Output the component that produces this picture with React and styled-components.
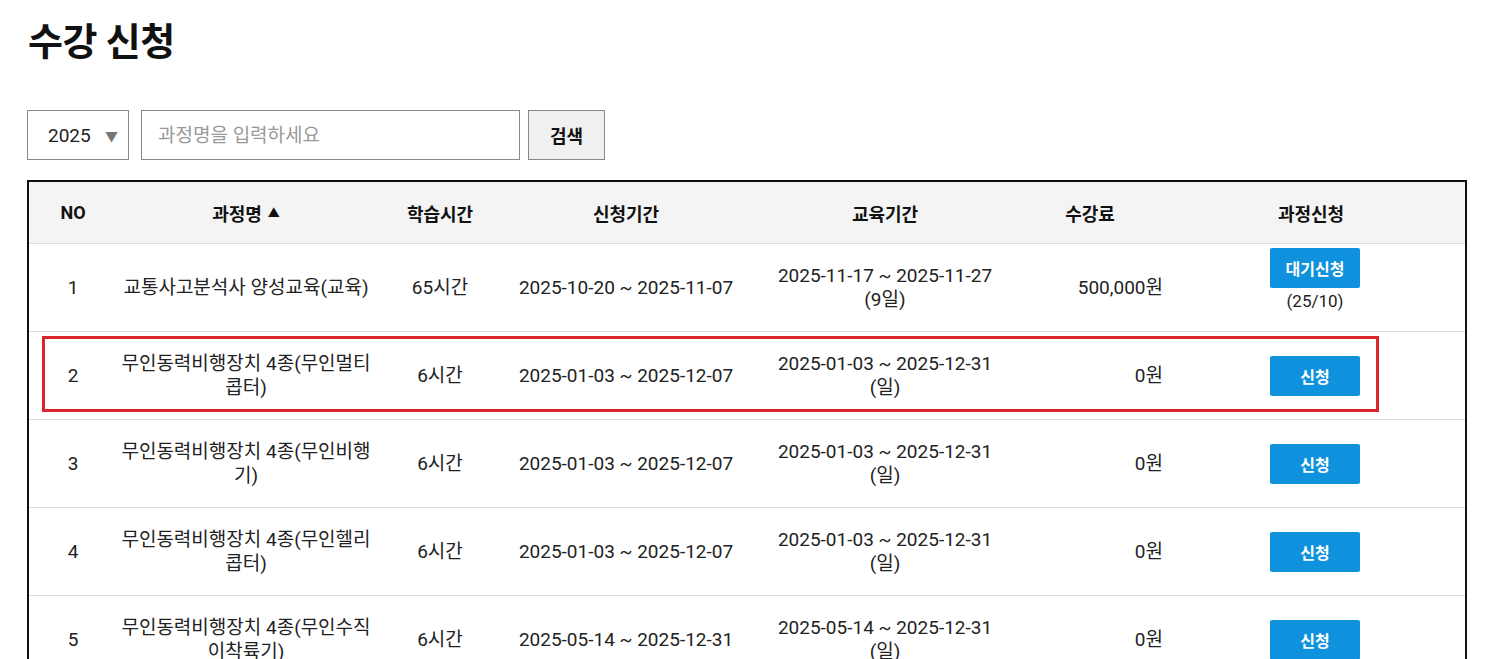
import React from "react";
import styled, { createGlobalStyle } from "styled-components";

const Global = createGlobalStyle`
  html, body { margin: 0; padding: 0; background: #fff; }
  body { font-family: Roboto, "Noto Sans CJK KR", sans-serif; color: #222; }
  * { box-sizing: border-box; }
`;

const Page = styled.div`
  padding: 18px 29px 0 27px;
`;

const Title = styled.h1`
  margin: 0;
  font-size: 38px;
  font-weight: 700;
  line-height: 48px;
  color: #111;
  letter-spacing: -0.5px;
  padding-left: 1px;
`;

const SearchBar = styled.div`
  display: flex;
  align-items: stretch;
  margin-top: 44px;
  height: 50px;
`;

const SelectBox = styled.div`
  width: 102px;
  border: 1px solid #888;
  display: flex;
  align-items: center;
  justify-content: space-between;
  padding: 0 10px 0 20px;
  font-size: 19px;
  color: #222;
  background: #fff;
`;

const Arrow = styled.span`
  color: #777;
  font-size: 13px;
`;

const SearchInput = styled.input`
  width: 379px;
  margin-left: 12px;
  border: 1px solid #888;
  padding: 0 16px;
  font-family: inherit;
  font-size: 19px;
  outline: none;
  &::placeholder { color: #999; }
`;

const SearchButton = styled.button`
  width: 77px;
  margin-left: 8px;
  border: 1px solid #888;
  background: #f0f0f0;
  font-family: inherit;
  font-size: 18px;
  font-weight: 700;
  color: #111;
  padding: 0;
`;

const Table = styled.div`
  margin-top: 20px;
  width: 1440px;
  border: 2px solid #111;
`;

const cols = "88px 258px 130px 242px 276px 146px 1fr";

const HeadRow = styled.div`
  display: grid;
  grid-template-columns: ${cols};
  height: 62px;
  background: #f4f4f4;
  border-bottom: 1px solid #ddd;
`;

const HeadCell = styled.div`
  display: flex;
  align-items: center;
  justify-content: center;
  gap: 6px;
  font-size: 18px;
  font-weight: 700;
  color: #111;
  padding-right: ${(p) => (p.$shift ? "12px" : "0")};
`;

const SortMark = styled.span`
  font-size: 12px;
`;

const Row = styled.div`
  position: relative;
  display: grid;
  grid-template-columns: ${cols};
  height: 88px;
  border-bottom: 1px solid #ddd;
  &::after {
    content: "";
    display: ${(p) => (p.$highlight ? "block" : "none")};
    position: absolute;
    left: 13px;
    right: 86px;
    top: 4px;
    bottom: 7px;
    border: 3px solid #d9252b;
    pointer-events: none;
  }
`;

const Cell = styled.div`
  display: flex;
  flex-direction: column;
  align-items: ${(p) => (p.$right ? "flex-end" : "center")};
  justify-content: center;
  text-align: ${(p) => (p.$right ? "right" : "center")};
  padding: ${(p) => (p.$right ? "0 6px 0 0" : p.$pr ? "0 4px 0 0" : "0 4px")};
  font-size: 19px;
  line-height: 24px;
  color: #222;
`;

const ApplyButton = styled.button`
  width: 90px;
  height: 40px;
  border: none;
  border-radius: 2px;
  background: #0f91dd;
  color: #fff;
  font-family: inherit;
  font-size: 16px;
  font-weight: 700;
  padding: 0;
`;

const Count = styled.div`
  margin-top: 1px;
  margin-bottom: 15px;
  font-size: 17px;
  line-height: 24px;
`;

const rows = [
  { no: 1, name: "교통사고분석사 양성교육(교육)", hours: "65시간", apply: "2025-10-20 ~ 2025-11-07", edu: "2025-11-17 ~ 2025-11-27", days: "(9일)", fee: "500,000원", btn: "대기신청", count: "(25/10)" },
  { no: 2, name: "무인동력비행장치 4종(무인멀티콥터)", hours: "6시간", apply: "2025-01-03 ~ 2025-12-07", edu: "2025-01-03 ~ 2025-12-31", days: "(일)", fee: "0원", btn: "신청", highlight: true },
  { no: 3, name: "무인동력비행장치 4종(무인비행기)", hours: "6시간", apply: "2025-01-03 ~ 2025-12-07", edu: "2025-01-03 ~ 2025-12-31", days: "(일)", fee: "0원", btn: "신청" },
  { no: 4, name: "무인동력비행장치 4종(무인헬리콥터)", hours: "6시간", apply: "2025-01-03 ~ 2025-12-07", edu: "2025-01-03 ~ 2025-12-31", days: "(일)", fee: "0원", btn: "신청" },
  { no: 5, name: "무인동력비행장치 4종(무인수직이착륙기)", hours: "6시간", apply: "2025-05-14 ~ 2025-12-31", edu: "2025-05-14 ~ 2025-12-31", days: "(일)", fee: "0원", btn: "신청" },
];

export default function App() {
  return (
    <>
      <Global />
      <Page>
        <Title>수강 신청</Title>
        <SearchBar>
          <SelectBox>
            <span>2025</span>
            <Arrow>▼</Arrow>
          </SelectBox>
          <SearchInput placeholder="과정명을 입력하세요" />
          <SearchButton>검색</SearchButton>
        </SearchBar>
        <Table>
          <HeadRow>
            <HeadCell>NO</HeadCell>
            <HeadCell>
              과정명<SortMark>▲</SortMark>
            </HeadCell>
            <HeadCell>학습시간</HeadCell>
            <HeadCell>신청기간</HeadCell>
            <HeadCell>교육기간</HeadCell>
            <HeadCell $shift>수강료</HeadCell>
            <HeadCell $shift>과정신청</HeadCell>
          </HeadRow>
          {rows.map((r) => (
            <Row key={r.no} $highlight={r.highlight}>
              <Cell>{r.no}</Cell>
              <Cell>{r.name}</Cell>
              <Cell>{r.hours}</Cell>
              <Cell>{r.apply}</Cell>
              <Cell>
                <div>{r.edu}</div>
                <div>{r.days}</div>
              </Cell>
              <Cell $right>{r.fee}</Cell>
              <Cell $pr>
                <ApplyButton>{r.btn}</ApplyButton>
                {r.count && <Count>{r.count}</Count>}
              </Cell>
            </Row>
          ))}
        </Table>
      </Page>
    </>
  );
}
